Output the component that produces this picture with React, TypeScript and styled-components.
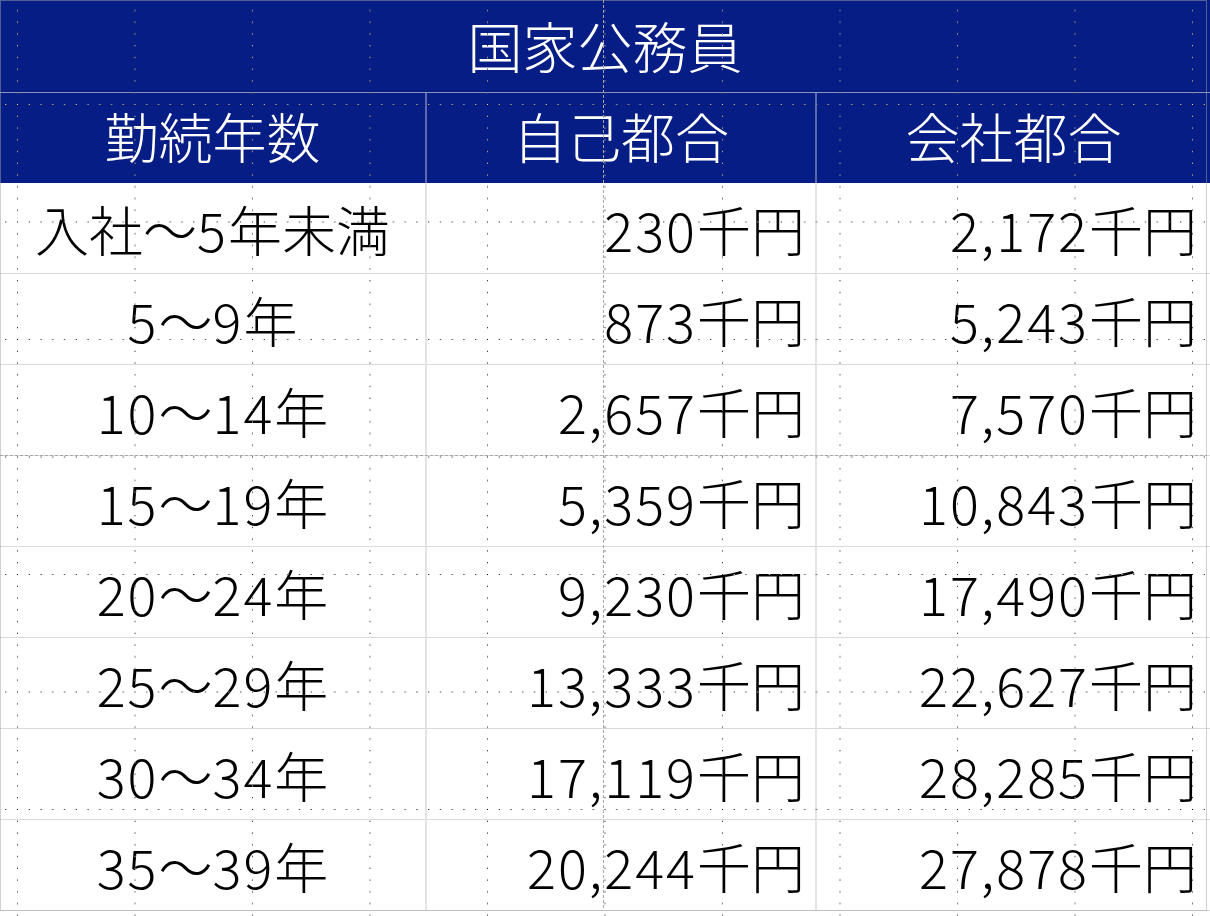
import React from "react";
import styled, { createGlobalStyle } from "styled-components";

const Global = createGlobalStyle`
  html, body { margin: 0; padding: 0; background: #ffffff; }
  body { font-family: "Noto Sans CJK JP", "Noto Sans", sans-serif; font-weight: 300; }
`;

const Page = styled.div`
  position: relative;
  width: 1210px;
  height: 916px;
  overflow: hidden;
  background: #ffffff;
`;

const Table = styled.div`
  display: grid;
  grid-template-columns: 427px 390px 393px;
  grid-template-rows: 93px 90px repeat(8, 91px);
`;

const TitleCell = styled.div`
  grid-column: 1 / -1;
  box-sizing: border-box;
  background: #051d85;
  border-bottom: 1px solid #8c93b4;
  color: #ffffff;
  font-size: 55px;
  font-weight: 300;
  line-height: 1;
  display: flex;
  align-items: center;
  justify-content: center;
  padding-bottom: 4px;
`;

const HeadCell = styled.div<{ $last?: boolean }>`
  box-sizing: border-box;
  background: #051d85;
  border-right: ${(p) => (p.$last ? "none" : "2px solid #5c69ad")};
  color: #ffffff;
  font-size: 54px;
  font-weight: 300;
  line-height: 1;
  display: flex;
  align-items: center;
  justify-content: center;
  padding-bottom: 4px;
`;

const DataCell = styled.div<{ $align: "center" | "right"; $pr?: number; $last?: boolean }>`
  box-sizing: border-box;
  background: #ffffff;
  border-right: ${(p) => (p.$last ? "none" : "2px solid #e4e4e4")};
  border-bottom: 1px solid #dadada;
  color: #000000;
  font-size: 54px;
  font-weight: 300;
  line-height: 1;
  white-space: nowrap;
  display: flex;
  align-items: center;
  justify-content: ${(p) => (p.$align === "center" ? "center" : "flex-end")};
  padding-right: ${(p) => (p.$pr ?? 0)}px;
  padding-top: 2px;
`;

const Num = styled.span`
  letter-spacing: 2px;
`;

const Overlay = styled.svg<{ $blend?: boolean }>`
  position: absolute;
  left: 0;
  top: 0;
  width: 1210px;
  height: 916px;
  pointer-events: none;
  mix-blend-mode: ${(p) => (p.$blend ? "difference" : "normal")};
`;

const rows: [string, string, string][] = [
  ["入社～5年未満", "230千円", "2,172千円"],
  ["5～9年", "873千円", "5,243千円"],
  ["10～14年", "2,657千円", "7,570千円"],
  ["15～19年", "5,359千円", "10,843千円"],
  ["20～24年", "9,230千円", "17,490千円"],
  ["25～29年", "13,333千円", "22,627千円"],
  ["30～34年", "17,119千円", "28,285千円"],
  ["35～39年", "20,244千円", "27,878千円"],
];

function Txt({ s }: { s: string }) {
  const parts = s.split(/([0-9,]+)/).filter((x) => x.length > 0);
  return (
    <>
      {parts.map((p, i) => (/^[0-9,]+$/.test(p) ? <Num key={i}>{p}</Num> : <React.Fragment key={i}>{p}</React.Fragment>))}
    </>
  );
}

const P = 117.5;
const D = 11.75;

function DotGrid() {
  const dots: React.ReactElement[] = [];
  for (let k = 0; k < 10; k++) {
    dots.push(<rect key={"h" + k} x={k * D} y={0} width={1} height={1} fill="#ffffff" />);
    if (k > 0) dots.push(<rect key={"v" + k} x={0} y={k * D} width={1} height={1} fill="#ffffff" />);
  }
  return (
    <Overlay $blend viewBox="0 0 1210 916">
      <defs>
        <pattern id="dotgrid" x={17} y={104} width={P} height={P} patternUnits="userSpaceOnUse">
          {dots}
        </pattern>
      </defs>
      <rect x={0} y={0} width={1210} height={916} fill="url(#dotgrid)" shapeRendering="crispEdges" />
    </Overlay>
  );
}

function PageLines() {
  return (
    <Overlay viewBox="0 0 1210 916">
      <line x1={603.5} y1={0} x2={603.5} y2={910} stroke="#a8a8a8" strokeWidth={1} strokeDasharray="3 2" />
      <line x1={0} y1={455.5} x2={1207} y2={455.5} stroke="#a8a8a8" strokeWidth={1} strokeDasharray="3 2" />
      <rect x={0.5} y={0.5} width={1206} height={910} fill="none" stroke="#a0a0a0" strokeWidth={1} strokeDasharray="1 1" />
    </Overlay>
  );
}

export default function App() {
  return (
    <>
      <Global />
      <Page>
        <Table>
          <TitleCell>国家公務員</TitleCell>
          <HeadCell>勤続年数</HeadCell>
          <HeadCell>自己都合</HeadCell>
          <HeadCell $last>会社都合</HeadCell>
          {rows.map((r, i) => (
            <React.Fragment key={i}>
              <DataCell $align="center"><Txt s={r[0]} /></DataCell>
              <DataCell $align="right" $pr={10}><Txt s={r[1]} /></DataCell>
              <DataCell $align="right" $pr={13} $last><Txt s={r[2]} /></DataCell>
            </React.Fragment>
          ))}
        </Table>
        <PageLines />
        <DotGrid />
      </Page>
    </>
  );
}
